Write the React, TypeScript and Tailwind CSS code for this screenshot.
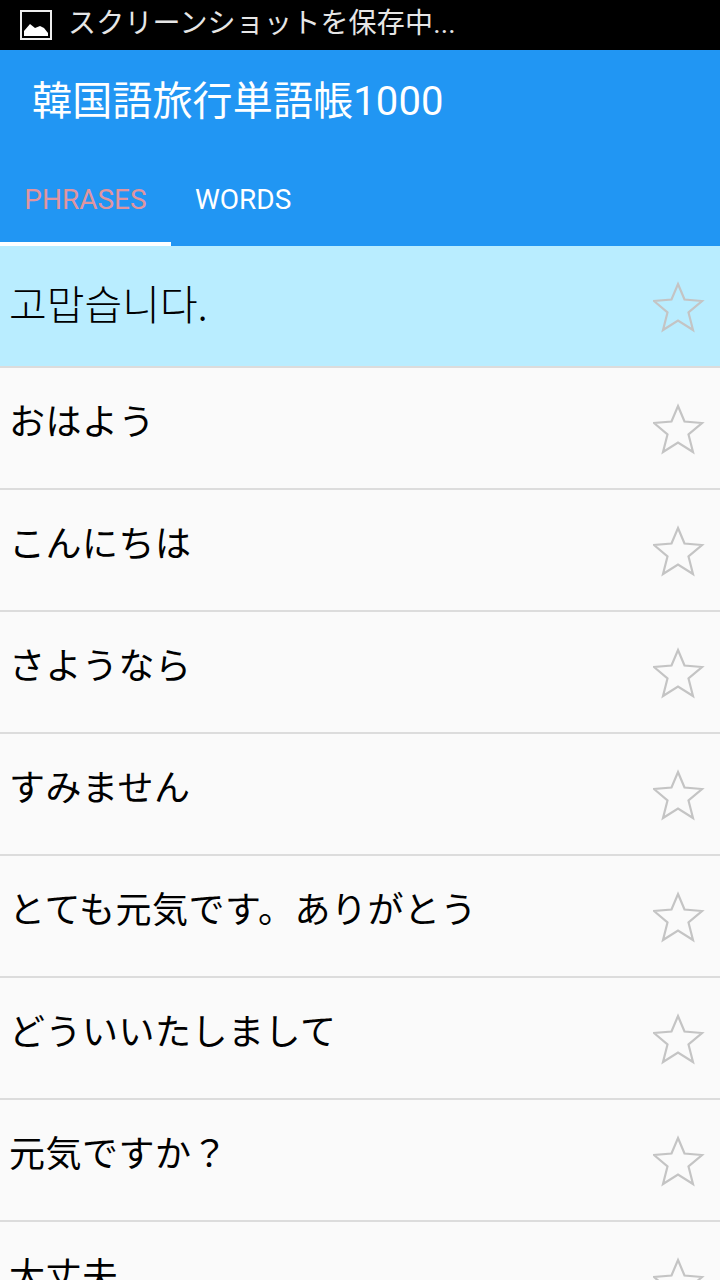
const cjk = "font-['Roboto','Noto_Sans_CJK_JP',sans-serif]";

const rows = [
  "고맙습니다.",
  "おはよう",
  "こんにちは",
  "さようなら",
  "すみません",
  "とても元気です。ありがとう",
  "どういいたしまして",
  "元気ですか？",
  "大丈夫",
];

function Star() {
  return (
    <svg width="54" height="54" viewBox="0 0 54 54" className="shrink-0">
      <polygon
        points="25,3 31.5,18.5 49,20 35.5,31.5 40,49 25,39.5 10,49 14.5,31.5 1,20 18.5,18.5"
        fill="none"
        stroke="#c4c4c4"
        strokeWidth="2.2"
      />
    </svg>
  );
}

export default function App() {
  return (
    <div className={`w-[720px] h-[1280px] overflow-hidden bg-[#fafafa] ${cjk}`}>
      <div className="h-[50px] bg-black flex items-center pl-5 text-[28px] text-[#e6e6e6]">
        <svg width="32" height="30" viewBox="0 0 32 30" className="mr-4 shrink-0">
          <rect x="1" y="1" width="30" height="28" fill="none" stroke="#eeeeee" strokeWidth="2" />
          <path d="M4 26 V21 L10 14 L15 18 L20 16 L24 18 L28 23 V26 Z" fill="#ffffff" />
        </svg>
        <span className="whitespace-nowrap pb-[3px] tracking-[0.2px]">スクリーンショットを保存中...</span>
      </div>
      <div className="bg-[#2196f3] h-[196px] flex flex-col">
        <div className="h-[100px] pl-[32px] pt-[4px] flex items-center text-[40px] tracking-[0.15px] text-white whitespace-nowrap">
          韓国語旅行単語帳1000
        </div>
        <div className="flex-1 flex items-start text-[28px]">
          <div className="w-[171px] h-[96px] border-b-4 border-white flex justify-center pt-[29px] text-[#e0959f]">
            <span>PHRASES</span>
          </div>
          <div className="pl-6 pt-[29px] text-white">WORDS</div>
        </div>
      </div>
      <div>
        {rows.map((t, i) => (
          <div
            key={t}
            className={`h-[122px] border-b-2 border-[#dcdcdc] flex pl-[9px] pr-[13px] ${i === 0 ? "bg-[#b9edff]" : "bg-[#fafafa]"}`}
          >
            {i === 0 ? (
              <div className="flex-1 font-['Noto_Sans_CJK_KR',sans-serif] font-light text-[41px] leading-[50px] pt-[31px] text-black whitespace-nowrap">{t}</div>
            ) : (
              <div className="flex-1 text-[36px] tracking-[0.5px] leading-[50px] pt-[30px] text-black whitespace-nowrap">{t}</div>
            )}
            <div className="pt-[35px]"><Star /></div>
          </div>
        ))}
      </div>
    </div>
  );
}
